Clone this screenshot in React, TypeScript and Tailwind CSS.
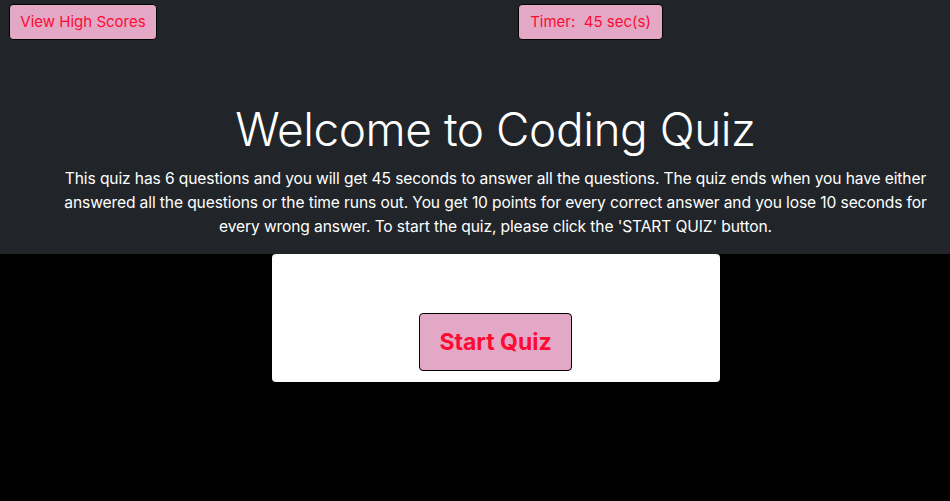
import React from 'react';

const font = { fontFamily: 'Inter, "Noto Sans", sans-serif' };

export default function App() {
  return (
    <div className="min-h-[501px] bg-black text-white" style={font}>
      <header className="bg-[#212529] pb-[15px]">
        <div className="flex items-start pt-1 pl-[9px]">
          <button className="h-9 w-[148px] rounded border border-black bg-[#e3a8c6] text-[15px] text-[#ff0a33]">
            View High Scores
          </button>
          <button className="ml-[361px] h-9 w-[145px] rounded border border-black bg-[#e3a8c6] text-[15px] text-[#ff0a33]">
            Timer:&nbsp; 45 sec(s)
          </button>
        </div>
        <div className="pl-[41px]">
          <h1 className="mt-[59px] text-center text-[46px] font-light leading-[60px] tracking-[-0.01em]">
            Welcome to Coding Quiz
          </h1>
          <p className="mx-auto mt-[8px] w-[866px] text-center text-[15.6px] leading-6 tracking-[-0.12px]">
            This quiz has 6 questions and you will get 45 seconds to answer all the questions. The quiz ends when you have
            either answered all the questions or the time runs out. You get 10 points for every correct answer and you lose
            10 seconds for every wrong answer. To start the quiz, please click the 'START QUIZ' button.
          </p>
        </div>
      </header>
      <main className="flex justify-center pl-[41px]">
        <div className="flex h-[128px] w-[448px] items-end justify-center rounded bg-white pb-[11px]">
          <button className="h-[58px] w-[153px] rounded border border-black bg-[#e3a8c6] text-[23px] font-bold text-[#ff0a33]">
            Start Quiz
          </button>
        </div>
      </main>
    </div>
  );
}
